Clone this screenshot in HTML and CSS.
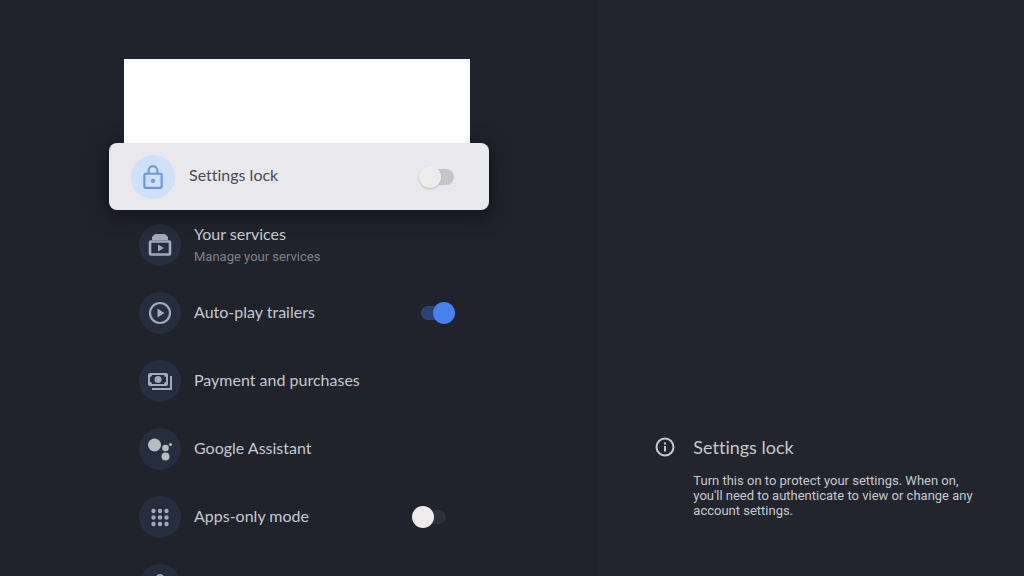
FILE: index.html
```html
<!DOCTYPE html>
<html lang="en">
<head>
<meta charset="utf-8">
<meta name="viewport" content="width=device-width, initial-scale=1">
<title>Settings</title>
<link rel="stylesheet" href="styles.css">
</head>
<body>
<div class="screen">
  <main class="panel">
    <div class="account"></div>
    <ul class="list">
      <li>
        <label class="row focused">
          <span class="badge"><svg viewBox="0 0 24 24"><g fill="none" stroke="currentColor" stroke-width="2"><rect x="4" y="9" width="16" height="13" rx="1"/><path d="M8 9V6a4 4 0 0 1 8 0v3"/></g><circle cx="12" cy="15.500" r="2" fill="currentColor"/></svg></span>
          <span class="title">Settings lock</span>
          <input class="switch" type="checkbox">
        </label>
      </li>
      <li>
        <button class="row" type="button">
          <span class="badge"><svg viewBox="0 0 24 24"><path fill="currentColor" d="M7 1h10l3 3v3H4V4z"/><rect x="2" y="8.500" width="20" height="13" rx="1" fill="none" stroke="currentColor" stroke-width="2.600"/><path fill="currentColor" d="M10 11.500v7l6-3.500z"/></svg></span>
          <span class="text"><span class="title">Your services</span><span class="sub">Manage your services</span></span>
        </button>
      </li>
      <li>
        <label class="row">
          <span class="badge"><svg viewBox="0 0 24 24"><circle cx="12" cy="12" r="10" fill="none" stroke="currentColor" stroke-width="2.200"/><path fill="currentColor" d="M9.500 7.500v9l7-4.500z"/></svg></span>
          <span class="title">Auto-play trailers</span>
          <input class="switch" type="checkbox" checked>
        </label>
      </li>
      <li>
        <button class="row" type="button">
          <span class="badge"><svg viewBox="0 0 24 24"><path fill="currentColor" fill-rule="evenodd" d="M2 4h16a2 2 0 0 1 2 2v9a2 2 0 0 1-2 2H2a2 2 0 0 1-2-2V6a2 2 0 0 1 2-2zm2 2a2 2 0 0 1-2 2v5a2 2 0 0 1 2 2h12a2 2 0 0 1 2-2V8a2 2 0 0 1-2-2z"/><circle cx="10" cy="10.500" r="3.500" fill="currentColor"/><path d="M23 7v13H4" fill="none" stroke="currentColor" stroke-width="2"/></svg></span>
          <span class="title">Payment and purchases</span>
        </button>
      </li>
      <li>
        <button class="row" type="button">
          <span class="badge assistant"><svg viewBox="0 0 24 24"><g fill="currentColor"><circle cx="6.500" cy="8" r="6.500"/><circle cx="17.500" cy="11" r="3.300"/><circle cx="17.500" cy="19.500" r="4"/><circle cx="22.500" cy="7.500" r="1.500"/></g></svg></span>
          <span class="title">Google Assistant</span>
        </button>
      </li>
      <li>
        <label class="row">
          <span class="badge"><svg viewBox="0 0 24 24"><g fill="currentColor"><circle cx="5.500" cy="6" r="2.200"/><circle cx="12" cy="6" r="2.200"/><circle cx="18.500" cy="6" r="2.200"/><circle cx="5.500" cy="12.500" r="2.200"/><circle cx="12" cy="12.500" r="2.200"/><circle cx="18.500" cy="12.500" r="2.200"/><circle cx="5.500" cy="19" r="2.200"/><circle cx="12" cy="19" r="2.200"/><circle cx="18.500" cy="19" r="2.200"/></g></svg></span>
          <span class="title">Apps-only mode</span>
          <input class="switch" type="checkbox">
        </label>
      </li>
      <li>
        <div class="row">
          <span class="badge"><svg viewBox="0 0 24 24"><circle cx="12" cy="5" r="4" fill="currentColor"/></svg></span>
        </div>
      </li>
    </ul>
  </main>
  <aside class="help">
    <svg class="info" viewBox="0 0 24 24"><circle cx="12" cy="12" r="8.500" fill="none" stroke="currentColor" stroke-width="2"/><path fill="currentColor" d="M11 11h2v5.500h-2zM11 7.500h2v2h-2z"/></svg>
    <div>
      <h2 class="help-title">Settings lock</h2>
      <p class="help-text">Turn this on to protect your settings. When on, you'll need to authenticate to view or change any account settings.</p>
    </div>
  </aside>
</div>
</body>
</html>
```
FILE: styles.css
```css
* {
  box-sizing: border-box;
}

body {
  margin: 0;
  background: #22252e;
  color: #c6c9d1;
  font-family: Roboto, "Liberation Sans", sans-serif;
  font-variant-ligatures: none;
}

.screen {
  display: grid;
  grid-template-columns: 7fr 5fr;
  height: 100vh;
  overflow: hidden;
}

.panel {
  padding: 59px 107px 0 109px;
  background: #20232c;
  border-right: 1px solid #1e2029;
}

.account {
  position: relative;
  z-index: 1;
  height: 84px;
  margin: 0 19px 0 15px;
  background: #fff;
}

.list {
  margin: 0;
  padding: 0;
  list-style: none;
}

.row {
  display: flex;
  align-items: center;
  gap: 13px;
  width: 100%;
  height: 68px;
  padding: 2px 34px 0 30px;
  border: 0;
  background: none;
  color: inherit;
  font: inherit;
  text-align: left;
}

.badge {
  display: grid;
  flex: none;
  place-items: center;
  width: 42px;
  height: 42px;
  border-radius: 50%;
  background: #252d3e;
  color: #a3a9b8;
}

.badge svg {
  width: 24px;
  height: 24px;
}

.assistant {
  color: #b4bdc2;
}

.title {
  flex: 1;
  padding-bottom: 3px;
  font-family: Lato, Roboto, sans-serif;
  font-size: 16px;
  line-height: 20px;
}

.text {
  display: flex;
  flex-direction: column;
}

.sub {
  color: #7d818b;
  font-size: 13px;
  line-height: 20px;
}

.focused {
  position: relative;
  height: 67px;
  padding: 0 27px 0 22px;
  gap: 14px;
  border-radius: 8px;
  background: #e9e8ed;
  color: #484a50;
  box-shadow: 0 4px 16px 4px #141820;
}

.focused .badge {
  width: 44px;
  height: 44px;
  background: #cfe0fb;
  color: #6b98db;
}

.focused .badge svg {
  width: 26px;
  height: 26px;
}

.switch {
  position: relative;
  flex: none;
  width: 43px;
  height: 22px;
  margin: 0;
  appearance: none;
}

.switch::before {
  position: absolute;
  inset: 4px 9px;
  border-radius: 7px;
  background: #2e313a;
  content: "";
}

.switch::after {
  position: absolute;
  left: 0;
  width: 22px;
  height: 22px;
  border-radius: 50%;
  background: #eeedec;
  content: "";
}

.switch:checked::before {
  background: #2b4275;
}

.switch:checked::after {
  right: 0;
  left: auto;
  background: #4482ef;
}

.focused .switch::before {
  inset: 3px 8px;
  border-radius: 8px;
  background: #c5c4c8;
}

.focused .switch::after {
  box-shadow: 0 1px 2px #b8b7bb;
}

.help {
  display: flex;
  align-items: flex-start;
  gap: 16px;
  padding: 435px 48px 0 56px;
}

.info {
  flex: none;
  width: 24px;
  height: 24px;
}

.help-title {
  margin: 0 0 14px;
  font-family: Lato, Roboto, sans-serif;
  font-size: 18px;
  font-weight: 400;
  line-height: 24px;
}

.help-text {
  margin: 0;
  font-size: 13px;
  line-height: 15px;
}
```
